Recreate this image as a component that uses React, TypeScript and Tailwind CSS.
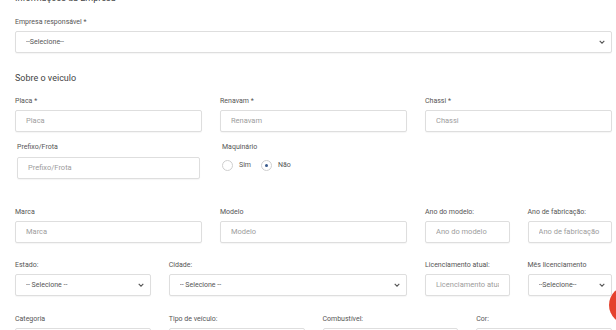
import React from "react";

const Chevron = () => (
  <svg width="6" height="4" viewBox="0 0 6 4" className="shrink-0">
    <path d="M0.7 0.8 L3 3.1 L5.3 0.8" fill="none" stroke="#555" strokeWidth="1.1" />
  </svg>
);

const Label = ({ children, className = "" }: { children: React.ReactNode; className?: string }) => (
  <div className={`h-[10px] whitespace-nowrap text-[7px] leading-[10px] text-[#555555] ${className}`}>{children}</div>
);

const Input = ({ ph, className = "" }: { ph: string; className?: string }) => (
  <div className={`mt-[4px] flex h-[22px] items-center rounded-[2px] border border-[#dedede] bg-white px-[10px] text-[7.5px] text-[#9d9d9d] shadow-[0_1px_1px_rgba(0,0,0,0.04)] ${className}`}>
    <span className="min-w-0 flex-1 overflow-hidden whitespace-nowrap">{ph}</span>
  </div>
);

const Select = ({ value, className = "" }: { value: string; className?: string }) => (
  <div className={`mt-[4px] flex h-[22px] items-center rounded-[2px] border border-[#dedede] bg-white pl-[10px] pr-[6px] text-[7px] text-[#555] shadow-[0_1px_1px_rgba(0,0,0,0.04)] ${className}`}>
    <span className="min-w-0 flex-1 overflow-hidden whitespace-nowrap">{value}</span>
    <Chevron />
  </div>
);

export default function App() {
  return (
    <div
      className="relative h-[330px] w-[616px] overflow-hidden bg-white"
      style={{ fontFamily: "Roboto, 'Liberation Sans', sans-serif" }}
    >
      <div className="pl-[15px] pr-[4px]">
        <div className="-mt-[8px] h-[12px] text-[9px] leading-[12px] text-[#444]">Informações da Empresa</div>
        <Label className="mt-[13px]">Empresa responsável *</Label>
        <Select value="--Selecione--" />

        <div className="mt-[19px] h-[12px] text-[9px] leading-[12px] text-[#444]">Sobre o veiculo</div>

        <div className="mt-[12px] grid grid-cols-12 gap-x-[18px]">
          <div className="col-span-4">
            <Label>Placa *</Label>
            <Input ph="Placa" />
          </div>
          <div className="col-span-4">
            <Label>Renavam *</Label>
            <Input ph="Renavam" />
          </div>
          <div className="col-span-4">
            <Label>Chassi *</Label>
            <Input ph="Chassi" />
          </div>
        </div>

        <div className="mt-[10px] grid grid-cols-12 gap-x-[18px]">
          <div className="col-span-4 px-[2px]">
            <Label>Prefixo/Frota</Label>
            <Input ph="Prefixo/Frota" className="mt-[5px]" />
          </div>
          <div className="col-span-4 px-[2px]">
            <Label>Maquinário</Label>
            <div className="mt-[8px] flex items-center text-[7px] text-[#555]">
              <span className="h-[11px] w-[11px] rounded-full border border-[#cfcfcf] bg-white" />
              <span className="ml-[6px]">Sim</span>
              <span className="ml-[10px] flex h-[11px] w-[11px] items-center justify-center rounded-full border border-[#cfcfcf] bg-white">
                <span className="h-[3px] w-[3px] rounded-full bg-[#3a5a8c]" />
              </span>
              <span className="ml-[6px]">Não</span>
            </div>
          </div>
        </div>

        <div className="mt-[28px] grid grid-cols-12 gap-x-[18px]">
          <div className="col-span-4">
            <Label>Marca</Label>
            <Input ph="Marca" />
          </div>
          <div className="col-span-4">
            <Label>Modelo</Label>
            <Input ph="Modelo" />
          </div>
          <div className="col-span-2">
            <Label>Ano do modelo:</Label>
            <Input ph="Ano do modelo" />
          </div>
          <div className="col-span-2">
            <Label>Ano de fabricação:</Label>
            <Input ph="Ano de fabricação" />
          </div>
        </div>

        <div className="mt-[17px] grid grid-cols-12 gap-x-[18px]">
          <div className="col-span-3">
            <Label>Estado:</Label>
            <Select value="-- Selecione --" />
          </div>
          <div className="col-span-5">
            <Label>Cidade:</Label>
            <Select value="-- Selecione --" />
          </div>
          <div className="col-span-2">
            <Label>Licenciamento atual:</Label>
            <Input ph="Licenciamento atual" />
          </div>
          <div className="col-span-2">
            <Label>Mês licenciamento</Label>
            <Select value="--Selecione--" />
          </div>
        </div>

        <div className="mt-[18px] grid grid-cols-12 gap-x-[18px]">
          <div className="col-span-3">
            <Label>Categoria</Label>
            <Input ph="" />
          </div>
          <div className="col-span-3">
            <Label>Tipo de veículo:</Label>
            <Input ph="" />
          </div>
          <div className="col-span-3">
            <Label>Combustível:</Label>
            <Input ph="" />
          </div>
          <div className="col-span-3">
            <Label>Cor:</Label>
            <Input ph="" />
          </div>
        </div>
      </div>

      <div className="absolute left-[609px] top-[286px] h-[38px] w-[38px] rounded-full bg-[#e5412d]" />
    </div>
  );
}
